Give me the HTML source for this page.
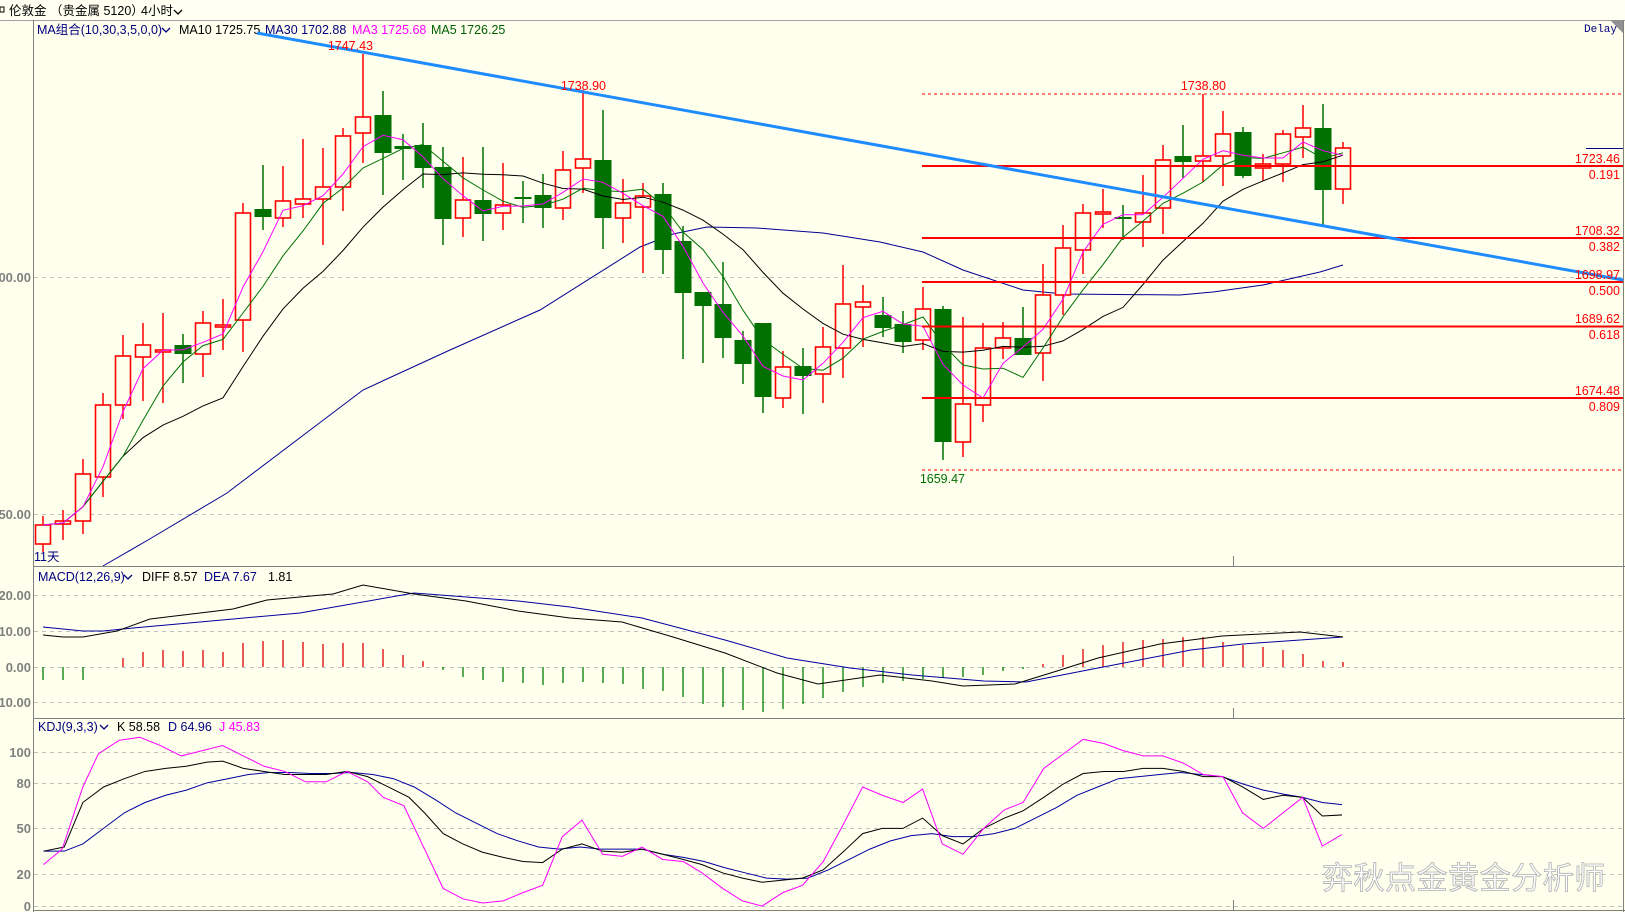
<!DOCTYPE html>
<html><head><meta charset="utf-8">
<style>
html,body{margin:0;padding:0;background:#FFFFEE;overflow:hidden;}
svg{display:block;font-family:"Liberation Sans","Noto Sans CJK SC",sans-serif;}
</style></head>
<body>
<svg id="s" width="1625" height="912" viewBox="0 0 1625 912" xmlns="http://www.w3.org/2000/svg">
<rect width="1625" height="912" fill="#FFFFEE"/>
<!-- top bar -->
<rect x="0" y="0" width="1625" height="20" fill="#FFFFF2"/>
<line x1="0" y1="20.5" x2="1625" y2="20.5" stroke="#A0A0A0"/>
<rect x="0" y="7" width="4" height="5" fill="none" stroke="#000" stroke-width="1"/>
<g font-size="12.5" fill="#000">
<text x="9" y="15">伦敦金</text>
<text x="50" y="15">（贵金属 5120）</text>
<text x="141" y="15">4小时</text>
</g>
<polyline points="174,10 178,14 182,10" fill="none" stroke="#000" stroke-width="1.3"/>
<!-- panel borders -->
<line x1="33.5" y1="20" x2="33.5" y2="912" stroke="#808080"/>
<line x1="1623.5" y1="20" x2="1623.5" y2="912" stroke="#808080"/>
<line x1="33" y1="566.5" x2="1625" y2="566.5" stroke="#808080"/>
<line x1="33" y1="718.5" x2="1625" y2="718.5" stroke="#808080"/>
<line x1="33" y1="910.5" x2="1625" y2="910.5" stroke="#808080"/>
<polygon points="1610,20 1623,20 1623,33" fill="#909090"/>
<text x="1584" y="32" font-size="11" fill="#000080" font-family="Liberation Mono,monospace">Delay</text>
<line x1="1233.5" y1="556" x2="1233.5" y2="566" stroke="#808080"/>
<line x1="1233.5" y1="708" x2="1233.5" y2="718" stroke="#808080"/>
<line x1="1233.5" y1="900" x2="1233.5" y2="910" stroke="#808080"/>
<line x1="1586" y1="148.5" x2="1623" y2="148.5" stroke="#000080"/>
<!-- grid -->
<g stroke="#C0C0C0" stroke-dasharray="4,4" stroke-width="1">
<line x1="34" y1="277.5" x2="1623" y2="277.5"/>
<line x1="34" y1="514.5" x2="1623" y2="514.5"/>
<line x1="34" y1="595.5" x2="1623" y2="595.5"/>
<line x1="34" y1="631.5" x2="1623" y2="631.5"/>
<line x1="34" y1="667.5" x2="1623" y2="667.5"/>
<line x1="34" y1="702.5" x2="1623" y2="702.5"/>
<line x1="34" y1="752.5" x2="1623" y2="752.5"/>
<line x1="34" y1="783.5" x2="1623" y2="783.5"/>
<line x1="34" y1="828.5" x2="1623" y2="828.5"/>
<line x1="34" y1="874.5" x2="1623" y2="874.5"/>
<line x1="34" y1="906.5" x2="1623" y2="906.5"/>
</g>
<g fill="#808080" font-size="13" font-weight="bold" text-anchor="end">
<text x="31" y="282">00.00</text>
<text x="31" y="519">50.00</text>
<text x="31" y="600">20.00</text>
<text x="31" y="636">10.00</text>
<text x="31" y="672">0.00</text>
<text x="31" y="707">10.00</text>
<text x="31" y="757">100</text>
<text x="31" y="788">80</text>
<text x="31" y="833">50</text>
<text x="31" y="879">20</text>
<text x="31" y="911">0</text>
</g>
<!-- legends -->
<g font-size="12.5">
<text x="37" y="34" fill="#000080">MA组合(10,30,3,5,0,0)</text>
<polyline points="162,28 166,32 170,28" fill="none" stroke="#000080" stroke-width="1.3"/>
<text x="179" y="34" fill="#000">MA10 1725.75</text>
<text x="265" y="34" fill="#000080">MA30 1702.88</text>
<text x="352" y="34" fill="#FF00FF">MA3 1725.68</text>
<text x="431" y="34" fill="#006000">MA5 1726.25</text>
<text x="38" y="581" fill="#000080">MACD(12,26,9)</text>
<polyline points="124,575 128,579 132,575" fill="none" stroke="#000080" stroke-width="1.3"/>
<text x="142" y="581" fill="#000">DIFF 8.57</text>
<text x="204" y="581" fill="#000080">DEA 7.67</text>
<text x="268" y="581" fill="#000">1.81</text>
<text x="38" y="731" fill="#000080">KDJ(9,3,3)</text>
<polyline points="100,725 104,729 108,725" fill="none" stroke="#000080" stroke-width="1.3"/>
<text x="117" y="731" fill="#000">K 58.58</text>
<text x="168" y="731" fill="#000080">D 64.96</text>
<text x="219" y="731" fill="#FF00FF">J 45.83</text>
<text x="34" y="561" fill="#000080">11天</text>
</g>
<g id="main"></g>
<!-- fib lines -->
<g stroke="#FF0000">
<line x1="922" y1="94" x2="1623" y2="94" stroke-dasharray="3,3" stroke-width="1"/>
<line x1="922" y1="470" x2="1623" y2="470" stroke-dasharray="3,3" stroke-width="1"/>
<line x1="922" y1="166" x2="1623" y2="166" stroke-width="2"/>
<line x1="922" y1="238" x2="1623" y2="238" stroke-width="2"/>
<line x1="922" y1="282" x2="1623" y2="282" stroke-width="2"/>
<line x1="922" y1="326.5" x2="1623" y2="326.5" stroke-width="2"/>
<line x1="922" y1="398" x2="1623" y2="398" stroke-width="2"/>
</g>
<line x1="257" y1="33" x2="1623" y2="280" stroke="#1E8CFF" stroke-width="3"/>
<g fill="#FF0000" font-size="12.5" text-anchor="end">
<text x="1620" y="163">1723.46</text><text x="1620" y="179">0.191</text>
<text x="1620" y="235">1708.32</text><text x="1620" y="251">0.382</text>
<text x="1620" y="279">1698.97</text><text x="1620" y="295">0.500</text>
<text x="1620" y="323">1689.62</text><text x="1620" y="339">0.618</text>
<text x="1620" y="395">1674.48</text><text x="1620" y="411">0.809</text>
<text x="373" y="50">1747.43</text>
<text x="606" y="90">1738.90</text>
<text x="1226" y="90">1738.80</text>
<text x="965" y="483" fill="#007000">1659.47</text>
</g>
<g id="ind"></g>
<text x="1322" y="889" font-size="31" fill="#FFFFFF" stroke="#B0B0B0" stroke-width="0.8" letter-spacing="0.5" font-family="'Noto Sans CJK SC',sans-serif">弈秋点金黄金分析师</text>
</svg>
<script>
var NS="http://www.w3.org/2000/svg";
function el(p,t,a){var e=document.createElementNS(NS,t);for(var k in a)e.setAttribute(k,a[k]);p.appendChild(e);return e;}
var C=[
[525,544,516,552,'r'],[521,524,510,540,'r'],[474,521,459,534,'r'],[405,477,393,497,'r'],[356,405,335,419,'r'],
[345,357,323,401,'r'],[350,352,313,403,'r'],[345,354,334,383,'g'],[323,354,311,377,'r'],[325,327,299,350,'r'],
[213,320,203,352,'r'],[209,217,165,230,'g'],[201,218,166,227,'r'],[199,204,139,218,'r'],[187,199,148,245,'r'],
[136,187,128,211,'r'],[117,133,54,163,'r'],[115,153,91,195,'g'],[146,149,134,180,'g'],[145,168,123,188,'g'],
[167,219,147,245,'g'],[200,218,157,237,'r'],[200,214,147,241,'g'],[205,213,163,230,'r'],[197,199,181,223,'g'],
[195,208,174,228,'g'],[170,208,151,220,'r'],[159,168,90,193,'r'],[160,218,110,249,'g'],[203,218,179,243,'r'],
[196,207,183,273,'r'],[194,250,183,274,'g'],[241,293,226,359,'g'],[292,306,292,363,'g'],[304,338,262,358,'g'],
[340,364,331,384,'g'],[323,397,323,413,'g'],[367,398,351,408,'r'],[366,376,348,414,'g'],[347,374,327,403,'r'],
[304,348,265,378,'r'],[302,307,285,347,'r'],[315,328,297,337,'g'],[324,342,311,353,'g'],[309,340,287,350,'r'],
[309,442,306,460,'g'],[404,442,317,457,'r'],[348,405,323,422,'r'],[338,348,322,359,'r'],[338,355,307,355,'g'],
[295,353,264,381,'r'],[248,295,225,315,'r'],[213,250,204,274,'r'],[212,214,189,228,'r'],[217,219,205,240,'g'],
[213,222,175,247,'r'],[160,208,145,234,'r'],[156,162,125,178,'g'],[156,161,94,182,'r'],[134,156,111,186,'r'],
[132,176,127,178,'g'],[164,168,154,181,'r'],[134,164,130,182,'r'],[128,137,105,158,'r'],[128,190,104,225,'g'],
[148,189,142,204,'r']];
var X=function(i){return 43+20*i;};
var closes=C.map(function(c){return c[4]=='r'?c[0]:c[1];});
function ma(n){var o=[];for(var i=0;i<closes.length;i++){var s=0,k=0;for(var j=Math.max(0,i-n+1);j<=i;j++){s+=closes[j];k++;}o.push(s/k);}return o;}
var m=document.getElementById('main');
function pl(g,pts,col,w){el(g,'polyline',{points:pts.map(function(p){return p[0]+','+p[1];}).join(' '),fill:'none',stroke:col,'stroke-width':w||1});}
pl(m,[[103,566],[148,540],[227,493],[363,390],[450,350],[540,310],[640,247],[673,234],[707,227],[757,228],[823,233],[880,242],[923,252],[963,270],[1023,290],[1063,294],[1180,295],[1213,292],[1263,285],[1320,272],[1343,265]],'#000090');
C.forEach(function(c,i){var x=X(i);var col=c[4]=='r'?'#FF0000':'#007000';
el(m,'line',{x1:x,y1:c[2],x2:x,y2:c[3],stroke:col,'stroke-width':1.5});
var h=Math.max(2,c[1]-c[0]);
if(c[4]=='r'){el(m,'rect',{x:x-7.5,y:c[0],width:15,height:h,fill:'#FFFFEE',stroke:col,'stroke-width':1.6});}
else{el(m,'rect',{x:x-8.5,y:c[0],width:17,height:h,fill:col});}
});
var m10=ma(10),m3=ma(3),m5=ma(5);
pl(m,m10.map(function(v,i){return [X(i),v.toFixed(1)];}),'#000');
pl(m,m5.map(function(v,i){return [X(i),v.toFixed(1)];}),'#007000');
pl(m,m3.map(function(v,i){return [X(i),v.toFixed(1)];}),'#FF00FF');
var g=document.getElementById('ind');
var H=[-13,-13,-13,0,9,15,17,16,17,15,24,26,27,25,23,24,24,18,12,6,-3,-10,-13,-15,-16,-18,-16,-15,-16,-17,-22,-24,-30,-37,-40,-43,-45,-42,-37,-31,-25,-20,-16,-14,-12,-11,-10,-8,-4,-2,3,12,18,22,25,27,28,30,30,25,22,20,17,13,6,5];
H.forEach(function(h,i){if(h==0)return;el(g,'line',{x1:X(i),y1:667,x2:X(i),y2:667-h,stroke:h>0?'#E00000':'#008000','stroke-width':1.3});});
pl(g,[[43,627],[83,631],[103,631],[133,628],[200,622],[300,613],[414,593],[518,601],[570,607],[642,618],[725,640],[787,658],[850,668],[912,675],[984,681],[1026,682],[1098,668],[1191,650],[1243,644],[1343,637]],'#0000A0');
pl(g,[[43,635],[63,637],[83,637],[117,631],[150,619],[200,613],[233,609],[267,600],[300,597],[333,594],[363,585],[414,594],[466,601],[518,611],[570,618],[622,622],[673,637],[725,653],[777,673],[818,684],[880,675],[932,681],[963,686],[1015,684],[1057,671],[1098,658],[1160,644],[1222,636],[1300,632],[1343,637]],'#000');
var k=el(g,'g',{transform:'scale(1.0355)'});
function pp(s,col){pl(k,s,col,0.97);}
pp([[42,822],[62,822],[80,815],[100,800],[120,785],[140,775],[160,768],[180,763],[200,756],[220,752],[240,748],[260,746],[280,746],[300,747],[320,747],[340,746],[360,748],[380,752],[400,760],[420,772],[440,785],[460,795],[480,805],[500,812],[520,818],[540,820],[560,818],[580,820],[600,820],[620,820],[640,825],[660,828],[680,832],[700,838],[720,843],[740,848],[760,849],[780,848],[800,840],[820,830],[840,820],[860,812],[880,807],[900,805],[920,808],[940,808],[960,805],[980,800],[1000,790],[1020,780],[1040,768],[1060,760],[1080,752],[1100,750],[1120,748],[1140,746],[1160,748],[1180,750],[1200,757],[1220,763],[1240,767],[1258,770],[1277,775],[1296,777]],'#0000A0');
pp([[42,822],[62,818],[80,775],[100,760],[120,752],[140,745],[160,742],[180,740],[200,736],[215,735],[235,742],[255,745],[275,748],[295,748],[315,748],[335,745],[355,750],[375,760],[395,770],[410,785],[428,805],[447,815],[466,823],[486,828],[505,832],[524,833],[543,820],[562,815],[582,822],[601,823],[620,820],[640,825],[660,830],[678,835],[698,843],[717,848],[736,852],[756,850],[775,848],[795,840],[815,822],[833,805],[852,800],[872,800],[891,790],[910,807],[930,815],[950,800],[970,790],[988,783],[1008,770],[1027,757],[1046,747],[1066,745],[1085,745],[1104,742],[1123,742],[1143,745],[1162,750],[1181,750],[1200,760],[1220,772],[1239,768],[1258,770],[1277,788],[1296,787]],'#000');
pp([[42,835],[60,820],[80,760],[95,728],[115,715],[135,712],[155,720],[175,730],[195,725],[215,720],[235,730],[255,740],[275,745],[295,755],[315,755],[335,745],[355,755],[370,770],[390,778],[410,820],[428,858],[447,868],[466,872],[486,870],[505,862],[524,855],[543,808],[562,792],[582,825],[601,827],[620,818],[640,830],[660,832],[678,843],[698,858],[717,870],[736,875],[756,862],[775,855],[795,832],[815,795],[833,760],[852,768],[872,775],[891,762],[910,815],[930,825],[950,800],[970,782],[988,775],[1008,742],[1027,728],[1046,714],[1066,718],[1085,725],[1104,730],[1123,730],[1143,737],[1162,748],[1181,750],[1200,785],[1220,800],[1239,785],[1258,770],[1277,817],[1296,806]],'#FF00FF');
</script>
</body></html>
